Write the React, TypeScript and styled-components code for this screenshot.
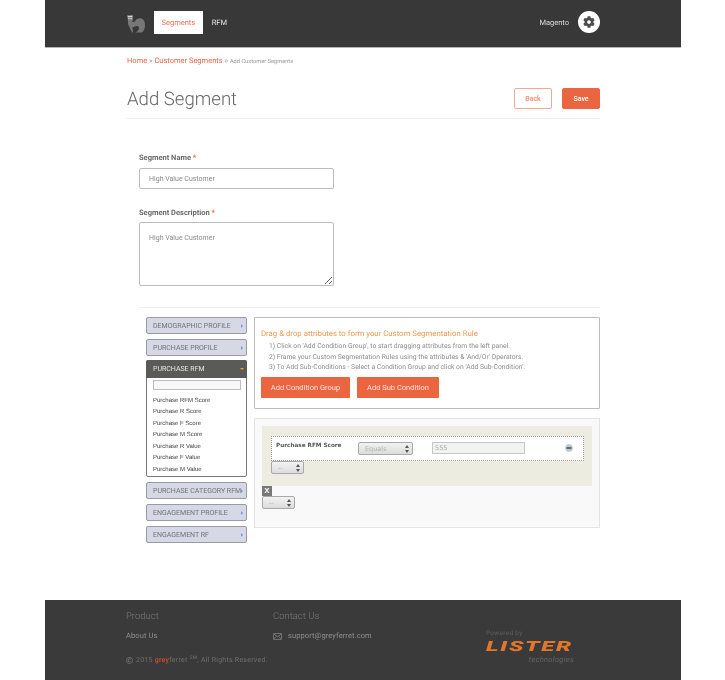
import React from 'react';
import styled, { createGlobalStyle } from 'styled-components';
import { FaCog, FaRegCopyright } from 'react-icons/fa';

const GlobalStyle = createGlobalStyle`
  html, body { margin: 0; padding: 0; background: #fff; }
  body { font-family: Roboto, "Liberation Sans", sans-serif; text-rendering: geometricPrecision; }
  * { box-sizing: border-box; }
`;

const ORANGE = '#ec6541';

const Page = styled.div`
  width: 636px;
  margin-left: 45px;
  height: 680px;
  display: flex;
  flex-direction: column;
  will-change: transform;
`;

const Header = styled.header`
  height: 48px;
  flex: none;
  background: #383838;
  border-bottom: 1px solid #b5b5b5;
  padding: 11px 81px 0 82px;
  display: flex;
  align-items: flex-start;
`;

const LogoWrap = styled.div`
  width: 18px;
  height: 20px;
  margin: 4px 9px 0 0;
`;

const NavTab = styled.a<{ $active?: boolean }>`
  height: 23px;
  padding: 0 ${p => (p.$active ? '7.5px' : '0')};
  margin-right: 9px;
  font-size: 7.5px;
  line-height: 23px;
  background: ${p => (p.$active ? '#fff' : 'transparent')};
  color: ${p => (p.$active ? '#f0724f' : '#e4e4e4')};
`;

const Spacer = styled.div`
  flex: 1;
`;

const UserName = styled.span`
  font-size: 7.5px;
  line-height: 23px;
  color: #dcdcdc;
  margin-right: 9px;
`;

const GearCircle = styled.div`
  width: 22px;
  height: 22px;
  border-radius: 50%;
  background: #fff;
  color: #4d4d4d;
  display: flex;
  align-items: center;
  justify-content: center;
`;

const Main = styled.main`
  flex: 1;
  padding: 8px 81px 0 81px;
`;

const Breadcrumb = styled.div`
  font-size: 7.5px;
  line-height: 10px;
  color: #999;
  padding-left: 1px;
`;

const CrumbLink = styled.a`
  color: ${ORANGE};
`;

const CrumbCurrent = styled.span`
  font-size: 5.7px;
  color: #9a9a9a;
`;

const TitleRow = styled.div`
  margin-top: 21px;
  height: 31px;
  padding-bottom: 9px;
  display: flex;
  justify-content: space-between;
  align-items: center;
  border-bottom: 1px solid #eeeeee;
`;

const Title = styled.h1`
  margin: 0;
  padding-left: 1px;
  font-size: 18.6px;
  font-weight: 300;
  color: #666;
`;

const TitleButtons = styled.div`
  display: flex;
  gap: 10px;
`;

const PageButton = styled.button<{ $filled?: boolean }>`
  width: 38px;
  height: 21px;
  padding: 0;
  border-radius: 2px;
  border: 1px solid ${p => (p.$filled ? ORANGE : '#f4a892')};
  background: ${p => (p.$filled ? ORANGE : '#fff')};
  color: ${p => (p.$filled ? '#fff' : '#f38a6d')};
  font: 500 7px Roboto, sans-serif;
`;

const Form = styled.form`
  margin-left: 13px;
  padding: 34px 0 21px;
  border-bottom: 1px solid #f0f0f0;
`;

const Label = styled.label`
  display: block;
  font-size: 7.5px;
  font-weight: 700;
  line-height: 10px;
  color: #6b6b6b;
  margin-bottom: 5px;
`;

const Required = styled.span`
  color: ${ORANGE};
`;

const NameInput = styled.input`
  display: block;
  width: 195px;
  height: 21px;
  padding: 0 9px;
  border: 1px solid #bcbcbc;
  border-radius: 2px;
  color: #8a8a8a;
  font: 7px Roboto, sans-serif;
  margin-bottom: 19px;
  outline: none;
`;

const DescInput = styled.textarea`
  display: block;
  width: 195px;
  height: 64px;
  margin-top: -1px;
  padding: 11px 9px;
  border: 1px solid #bcbcbc;
  border-radius: 2px;
  color: #8a8a8a;
  font: 7px Roboto, sans-serif;
  outline: none;
`;

const Builder = styled.section`
  display: grid;
  grid-template-columns: 101px 346px;
  column-gap: 7px;
  padding: 9px 0 0 20px;
`;

const Sidebar = styled.div`
  display: flex;
  flex-direction: column;
  gap: 5px;
`;

const Section = styled.div`
  height: 17px;
  padding: 0 3px 0 6px;
  display: flex;
  align-items: center;
  justify-content: space-between;
  border: 1px solid #9a9aa5;
  border-radius: 2px;
  background: #d7d8e6;
  font-size: 7px;
  color: #727278;
  white-space: nowrap;
`;

const OpenGroup = styled.div`
  margin-top: -1px;
  border: 1px solid #77777a;
  border-radius: 2px;
  background: #fff;
`;

const OpenHead = styled.div`
  height: 18px;
  margin: -1px -1px 0;
  padding: 0 3px 0 7px;
  display: flex;
  align-items: center;
  justify-content: space-between;
  background: #5a5a58;
  border-radius: 2px 2px 0 0;
  color: #e6e6e6;
  font-size: 7px;
`;

const Arrow = styled.span<{ $down?: boolean }>`
  width: 0;
  height: 0;
  ${p =>
    p.$down
      ? `border-left: 2px solid transparent; border-right: 2px solid transparent; border-top: 2px solid #e9a11b;`
      : `border-top: 2px solid transparent; border-bottom: 2px solid transparent; border-left: 2px solid #6f9bd1;`}
`;

const Filter = styled.div`
  height: 10px;
  margin: 2px 5px 5.5px 6px;
  border: 1px solid #bdbdbd;
  background: #f8f8f8;
`;

const AttrItem = styled.div`
  height: 11.5px;
  padding-left: 6px;
  font: 6px/11.5px "Liberation Sans", sans-serif;
  color: #3c3c3c;
`;

const RightColumn = styled.div`
  display: flex;
  flex-direction: column;
  gap: 9px;
`;

const InfoBox = styled.div`
  height: 92px;
  padding: 10px 6px 0;
  border: 1px solid #bcbcbc;
  border-radius: 1px;
`;

const InfoTitle = styled.div`
  font-size: 7.8px;
  line-height: 11px;
  color: #f0994f;
  margin-bottom: 2px;
`;

const InfoLine = styled.div`
  font-size: 6.8px;
  line-height: 10.7px;
  color: #8c8c8c;
  padding-left: 8px;
`;

const InfoButtons = styled.div`
  display: flex;
  gap: 7px;
  margin-top: 4px;
`;

const ActionButton = styled.button<{ $width: number }>`
  width: ${p => p.$width}px;
  height: 21px;
  padding: 0;
  border: none;
  border-radius: 1px;
  background: ${ORANGE};
  color: #fde4dc;
  font: 7.5px Roboto, sans-serif;
`;

const Canvas = styled.div`
  height: 110px;
  padding: 7px;
  border: 1px solid #e4e4e4;
  background: #f9f9f9;
`;

const ConditionGroup = styled.div`
  height: 60px;
  padding: 10px 8px 0 9px;
  background: #ecede0;
`;

const ConditionRow = styled.div`
  height: 25px;
  display: flex;
  align-items: flex-start;
  border: 1px dotted #999;
  background: #fff;
  padding: 5px 0 0 4px;
`;

const AttrName = styled.span`
  width: 82px;
  flex: none;
  font: 700 5.7px/9px "DejaVu Sans", sans-serif;
  color: #555;
`;

const FakeSelect = styled.div<{ $width: number }>`
  width: ${p => p.$width}px;
  height: 13px;
  flex: none;
  padding: 0 3px 0 6px;
  display: flex;
  align-items: center;
  justify-content: space-between;
  border: 1px solid #a8a8a8;
  border-radius: 2px;
  background: linear-gradient(#f2f2f2, #dcdcdc);
  font: 6.5px "DejaVu Sans", sans-serif;
  color: #b0b0b0;
`;

const SelectArrows = styled.svg`
  width: 4px;
  height: 8px;
  fill: #555;
`;

const ValueBox = styled.div`
  width: 93px;
  height: 12px;
  flex: none;
  margin-left: 19px;
  padding-left: 2px;
  border: 1px solid #c6c6c6;
  background: #f2f2f2;
  font: 6.5px/10px "DejaVu Sans", sans-serif;
  color: #aaa;
`;

const MinusWrap = styled.div`
  display: flex;
  margin: 2px 0 0 40px;
`;

const CloseBox = styled.div`
  width: 10px;
  height: 10px;
  background: #777;
  color: #eee;
  font: 700 7px/10px "DejaVu Sans", sans-serif;
  text-align: center;
`;

const Footer = styled.footer`
  height: 80px;
  flex: none;
  background: #3a3a3a;
  padding: 11px 26px 0 81px;
  display: flex;
  position: relative;
`;

const FootColumn = styled.div`
  width: 147px;
`;

const FootHeading = styled.div`
  font-size: 9.5px;
  font-weight: 300;
  line-height: 12px;
  color: #7a7a7a;
  margin-bottom: 7px;
`;

const FootLink = styled.div`
  font-size: 7.5px;
  line-height: 12px;
  color: #8f8f8f;
  display: flex;
  align-items: center;
  gap: 6px;
  letter-spacing: 0.1px;
`;

const Copyright = styled.div`
  position: absolute;
  left: 81px;
  top: 54px;
  font-size: 7px;
  line-height: 12px;
  color: #6f6f6f;
  display: flex;
  align-items: center;
  gap: 3px;
  letter-spacing: 0.25px;
  white-space: nowrap;
`;

const Grey = styled.span`
  color: #cf4f2c;
  font-weight: 500;
`;

const Sup = styled.sup`
  font-size: 5px;
  line-height: 0;
`;

const Powered = styled.div`
  margin-left: 66px;
  padding-top: 18px;
  width: 90px;
`;

const PoweredText = styled.div`
  font-size: 6.5px;
  line-height: 8px;
  color: #5f5f5f;
  letter-spacing: 0.3px;
`;

const ListerWord = styled.div`
  font: italic 900 14px/13px Roboto, sans-serif;
  color: #e2762b;
  letter-spacing: 1px;
  margin-top: 4px;
  transform: scaleX(1.7);
  transform-origin: left center;
`;

const TechWord = styled.div`
  margin-top: 2px;
  font: italic 7.5px/8px Roboto, sans-serif;
  color: #666;
  text-align: right;
  padding-right: 2px;
  letter-spacing: 0.3px;
`;

const ArrowPair = () => (
  <SelectArrows viewBox="0 0 4 8">
    <path d="M2 0l2 3H0zM2 8L0 5h4z" />
  </SelectArrows>
);

const Ferret = () => (
  <svg width="18" height="18" viewBox="0 0 18 18">
    <path d="M0 0h6v5L5 6.500C6.500 7.500 7.500 7 8.500 5.500 10 3.800 12.500 2.800 14.500 3.500 17 4.500 18 7 18 10c0 3.500-1.200 6-3 7.500H8.500c2.500-1.200 4-3.500 3.500-5-.5-1.500-2.500-2-5-.5L5.500 12l.5 5.500H5L1 9V6z" fill="#777" />
    <path d="M.8 1h4.400v1.200H.8zM1.200 3h1.300v1.300H1.200zM3.500 3h1.300v1.300H3.500z" fill="#d6d6d6" />
  </svg>
);

const Envelope = () => (
  <svg width="9" height="7" viewBox="0 0 9 7" fill="none" stroke="#8f8f8f" strokeWidth="0.7">
    <rect x="0.400" y="0.400" width="8.200" height="6.200" rx="0.800" />
    <path d="M.6.800l3.900 3 3.900-3M.6 6.200l2.800-3M8.400 6.200l-2.800-3" />
  </svg>
);

const sections = ['DEMOGRAPHIC PROFILE', 'PURCHASE PROFILE'];
const lowerSections = ['PURCHASE CATEGORY RFM', 'ENGAGEMENT PROFILE', 'ENGAGEMENT RF'];
const attributes = [
  'Purchase RFM Score',
  'Purchase R Score',
  'Purchase F Score',
  'Purchase M Score',
  'Purchase R Value',
  'Purchase F Value',
  'Purchase M Value',
];

export default function App() {
  return (
    <>
      <GlobalStyle />
      <Page>
        <Header>
          <LogoWrap>
            <Ferret />
          </LogoWrap>
          <NavTab $active>Segments</NavTab>
          <NavTab>RFM</NavTab>
          <Spacer />
          <UserName>Magento</UserName>
          <GearCircle>
            <FaCog size={12} />
          </GearCircle>
        </Header>

        <Main>
          <Breadcrumb>
            <CrumbLink>Home</CrumbLink> » <CrumbLink>Customer Segments</CrumbLink> »{' '}
            <CrumbCurrent>Add Customer Segments</CrumbCurrent>
          </Breadcrumb>

          <TitleRow>
            <Title>Add Segment</Title>
            <TitleButtons>
              <PageButton type="button">Back</PageButton>
              <PageButton type="button" $filled>
                Save
              </PageButton>
            </TitleButtons>
          </TitleRow>

          <Form>
            <Label>
              Segment Name <Required>*</Required>
            </Label>
            <NameInput readOnly value="High Value Customer" />
            <Label>
              Segment Description <Required>*</Required>
            </Label>
            <DescInput readOnly value="High Value Customer" />
          </Form>

          <Builder>
            <Sidebar>
              {sections.map(s => (
                <Section key={s}>
                  {s}
                  <Arrow />
                </Section>
              ))}
              <OpenGroup>
                <OpenHead>
                  PURCHASE RFM
                  <Arrow $down />
                </OpenHead>
                <Filter />
                {attributes.map(a => (
                  <AttrItem key={a}>{a}</AttrItem>
                ))}
              </OpenGroup>
              {lowerSections.map(s => (
                <Section key={s}>
                  {s}
                  <Arrow />
                </Section>
              ))}
            </Sidebar>

            <RightColumn>
              <InfoBox>
                <InfoTitle>Drag &amp; drop attributes to form your Custom Segmentation Rule</InfoTitle>
                <InfoLine>1) Click on 'Add Condition Group', to start dragging attributes from the left panel.</InfoLine>
                <InfoLine>2) Frame your Custom Segmentation Rules using the attributes &amp; 'And/Or' Operators.</InfoLine>
                <InfoLine>3) To Add Sub-Conditions - Select a Condition Group and click on 'Add Sub-Condition'.</InfoLine>
                <InfoButtons>
                  <ActionButton type="button" $width={89}>
                    Add Condition Group
                  </ActionButton>
                  <ActionButton type="button" $width={82}>
                    Add Sub Condition
                  </ActionButton>
                </InfoButtons>
              </InfoBox>

              <Canvas>
                <ConditionGroup>
                  <ConditionRow>
                    <AttrName>Purchase RFM Score</AttrName>
                    <FakeSelect $width={55}>
                      Equals
                      <ArrowPair />
                    </FakeSelect>
                    <ValueBox>555</ValueBox>
                    <MinusWrap>
                      <svg width="8" height="8" viewBox="0 0 8 8">
                        <circle cx="4" cy="4" r="3.800" fill="#b9c8d2" />
                        <rect x="1.500" y="3.300" width="5" height="1.400" fill="#444" />
                      </svg>
                    </MinusWrap>
                  </ConditionRow>
                  <FakeSelect $width={33}>
                    --
                    <ArrowPair />
                  </FakeSelect>
                </ConditionGroup>
                <CloseBox>X</CloseBox>
                <FakeSelect $width={33}>
                  --
                  <ArrowPair />
                </FakeSelect>
              </Canvas>
            </RightColumn>
          </Builder>
        </Main>

        <Footer>
          <FootColumn>
            <FootHeading>Product</FootHeading>
            <FootLink>About Us</FootLink>
          </FootColumn>
          <FootColumn>
            <FootHeading>Contact Us</FootHeading>
            <FootLink>
              <Envelope />
              support@greyferret.com
            </FootLink>
          </FootColumn>
          <Powered>
            <PoweredText>Powered by</PoweredText>
            <ListerWord>LISTER</ListerWord>
            <TechWord>technologies</TechWord>
          </Powered>
          <Copyright>
            <FaRegCopyright size={7} />
            <span>
              2015 <Grey>grey</Grey>ferret <Sup>SM</Sup>, All Rights Reserved.
            </span>
          </Copyright>
        </Footer>
      </Page>
    </>
  );
}
